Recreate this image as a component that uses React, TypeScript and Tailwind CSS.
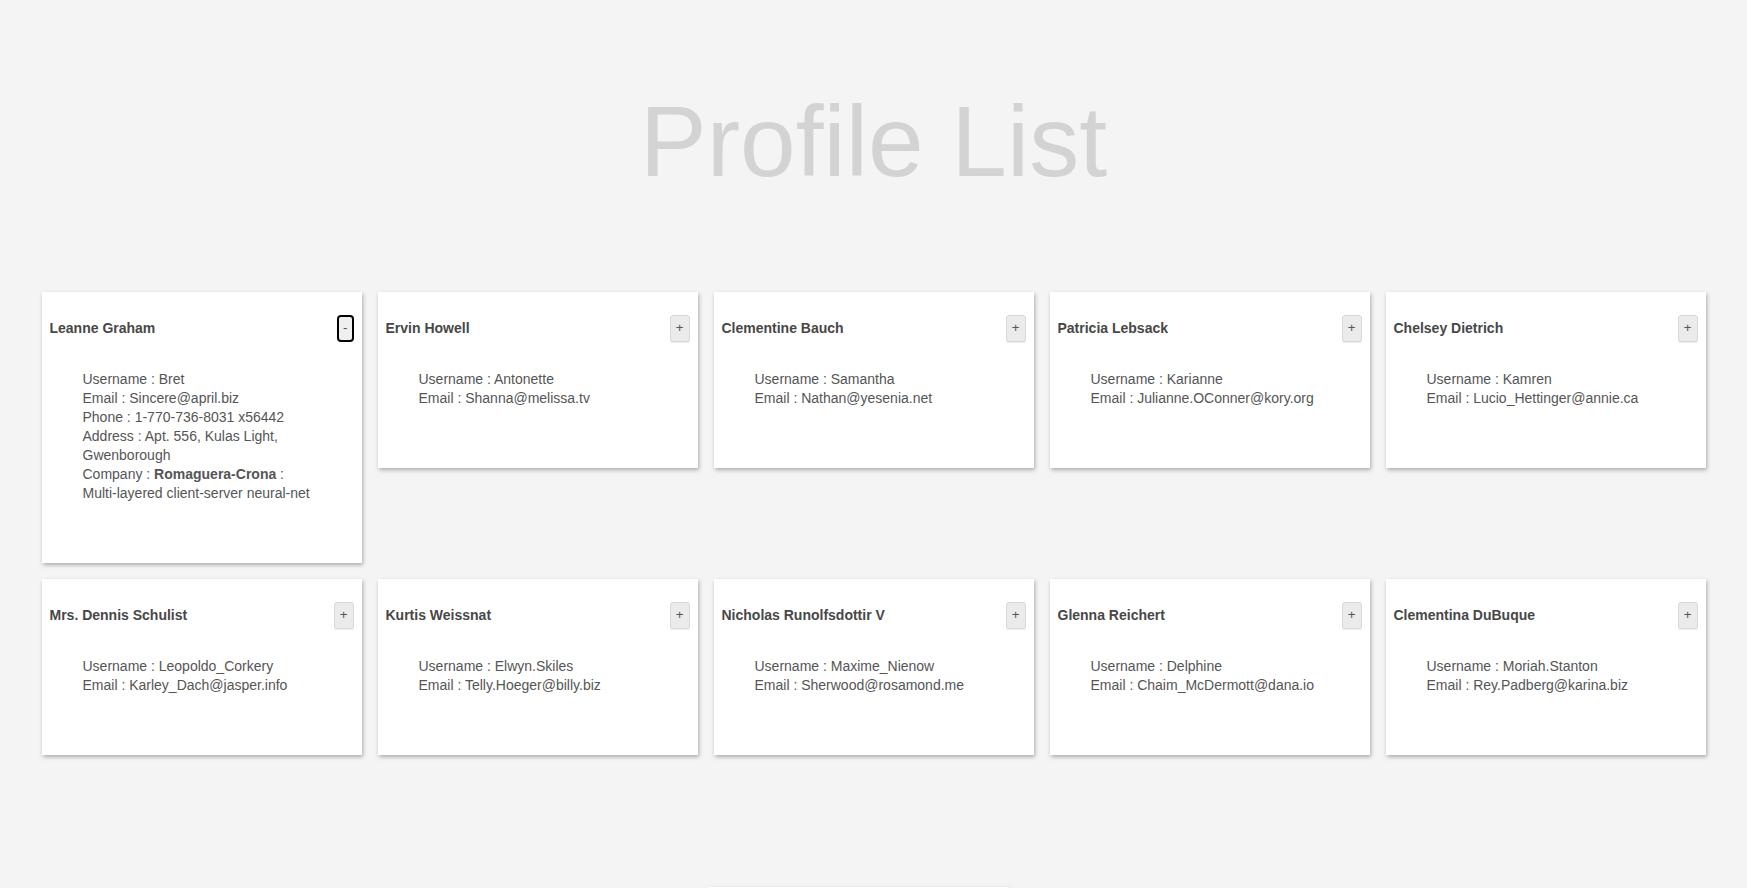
import * as React from 'react';

type Profile = {
  name: string;
  username: string;
  email: string;
  phone?: string;
  address?: string;
  company?: { name: string; catchPhrase: string };
  open?: boolean;
};

const profiles: Profile[] = [
  {
    name: 'Leanne Graham',
    username: 'Bret',
    email: 'Sincere@april.biz',
    phone: '1-770-736-8031 x56442',
    address: 'Apt. 556, Kulas Light, Gwenborough',
    company: { name: 'Romaguera-Crona', catchPhrase: 'Multi-layered client-server neural-net' },
    open: true,
  },
  { name: 'Ervin Howell', username: 'Antonette', email: 'Shanna@melissa.tv' },
  { name: 'Clementine Bauch', username: 'Samantha', email: 'Nathan@yesenia.net' },
  { name: 'Patricia Lebsack', username: 'Karianne', email: 'Julianne.OConner@kory.org' },
  { name: 'Chelsey Dietrich', username: 'Kamren', email: 'Lucio_Hettinger@annie.ca' },
  { name: 'Mrs. Dennis Schulist', username: 'Leopoldo_Corkery', email: 'Karley_Dach@jasper.info' },
  { name: 'Kurtis Weissnat', username: 'Elwyn.Skiles', email: 'Telly.Hoeger@billy.biz' },
  { name: 'Nicholas Runolfsdottir V', username: 'Maxime_Nienow', email: 'Sherwood@rosamond.me' },
  { name: 'Glenna Reichert', username: 'Delphine', email: 'Chaim_McDermott@dana.io' },
  { name: 'Clementina DuBuque', username: 'Moriah.Stanton', email: 'Rey.Padberg@karina.biz' },
];

/** One profile card: name + toggle, then the detail list */
const ProfileCard: React.FC<{ profile: Profile }> = ({ profile }) => {
  const open = !!profile.open;
  return (
    <div className="w-[320px] bg-white shadow-[1px_2px_4px_rgba(0,0,0,0.3)]">
      <div className="flex h-[72px] items-center justify-between px-2">
        <span className="text-[14px] font-bold text-[#474747]">{profile.name}</span>
        {open ? (
          <button className="h-[27px] rounded-[4px] border-2 border-black bg-[#efefef] px-[4px] text-[13.3px] leading-none text-[#555]">
            -
          </button>
        ) : (
          <button className="h-[27px] rounded-[3px] border border-[#d9d9d9] bg-[#ebebeb] px-[5px] text-[13.3px] leading-none text-[#555] shadow-[0_1px_1px_rgba(0,0,0,0.08)]">
            +
          </button>
        )}
      </div>
      <ul className="pt-[6px] pb-[60px] pl-[41px] pr-[46px] text-[14px] leading-[19px] text-[#555]">
        <li>Username : {profile.username}</li>
        <li>Email : {profile.email}</li>
        {open && (
          <>
            <li>Phone : {profile.phone}</li>
            <li>Address : {profile.address}</li>
            <li>
              Company : <b className="font-bold">{profile.company?.name}</b> : {profile.company?.catchPhrase}
            </li>
          </>
        )}
      </ul>
    </div>
  );
};

export default function App() {
  return (
    <div
      className="min-h-screen bg-[#f4f4f4]"
      style={{ fontFamily: '"Liberation Sans", Arial, sans-serif' }}
    >
      <h1 className="pt-[91px] text-center text-[100px] font-normal leading-[100px] text-[#d3d3d3]">
        Profile List
      </h1>

      <div className="mx-auto mt-[101px] flex w-[1664px] flex-wrap items-start gap-4">
        {profiles.map((p) => (
          <ProfileCard key={p.name} profile={p} />
        ))}
      </div>

      {/* next block, just below the fold */}
      <div className="flex justify-center pr-[29px]">
        <div className="mt-[132px] h-[40px] w-[300px] bg-white shadow-[1px_2px_4px_rgba(0,0,0,0.3)]" />
      </div>
    </div>
  );
}
